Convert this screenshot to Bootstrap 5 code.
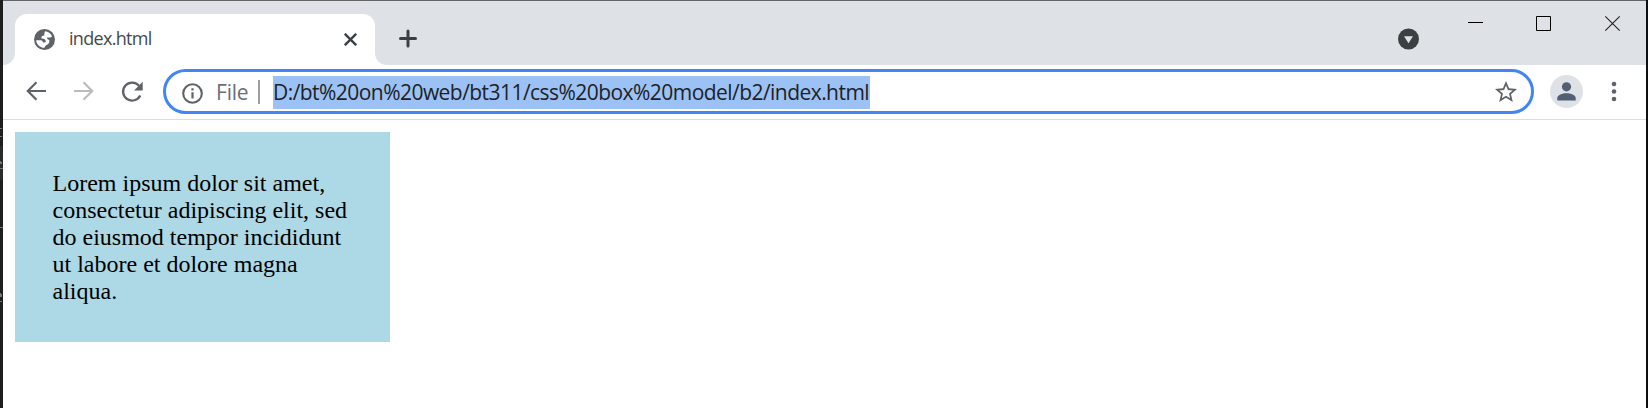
<!DOCTYPE html>
<html lang="en">
<head>
<meta charset="utf-8">
<title>index.html</title>
<link href="https://cdn.jsdelivr.net/npm/bootstrap@5.3.0/dist/css/bootstrap.min.css" rel="stylesheet">
<style>
body{height:408px;overflow:hidden;background:#1c1c1c;font-family:"Open Sans","Noto Sans",sans-serif;color:#3c4043}
svg{display:block;flex:none}
.edge-right{width:2px;background:#0c1013}
.strip{height:65px;background:#dee1e6;border-top:1px solid #626468}
.tab-curve{width:12px;height:51px;border-bottom-right-radius:12px;background:#dee1e6}
.tab-curve.after{border-radius:0 0 0 12px}
.tab-side{background:#fff;height:51px}
.tab-main{width:360px;height:51px;background:#fff;border-radius:12px 12px 0 0;padding:0 18px 1px 19px}
.tab-name{font-size:18px;line-height:24px;letter-spacing:-.7px;margin-left:14px;padding-bottom:2px;color:#45494d}
.new-tab{margin-left:10px;margin-bottom:2px}
.bar{height:55px;border-bottom:1px solid #dadce0}
.omni{width:1371px;height:45px;border:3px solid #4285f4;border-radius:23px;margin:4px 0 0 20px}
.scheme{font-size:21px;line-height:33px;color:#6b6e73;letter-spacing:-.2px;width:33px;margin-left:13px;padding-top:1px;white-space:nowrap}
.divide{width:2px;height:24px;background:#9b9da0;margin-left:9px}
.url{font-size:21px;line-height:33px;height:33px;width:597px;background:#9cc2f5;color:#202124;letter-spacing:-.55px;margin:1px 0 0 13px;white-space:nowrap}
.fav-star{margin-right:14px}
.page-box{width:375px;height:210px;padding:37.5px;margin:12px;background:#add8e6;color:#000;font:24px/27px "Liberation Serif",serif}
</style>
</head>
<body class="d-flex">
<svg width="3" height="408" viewBox="0 0 3 408" fill="#777"><path fill="#1e1e1e" d="M0 0h3v408H0z"/><path fill="#2a2a2d" d="M0 146h3v34H0z"/><path d="M0 128h2v1H0zm0 8h2v1H0zm0 25h1v1h1v2H0zm0 7h3v1H0zm0 59h3v1H0zm0 66h1v1h1v3H0zm0 8h2v1H0z"/></svg>
<main class="flex-grow-1 bg-white">
  <div class="strip d-flex align-items-end">
    <div class="tab-side"><div class="tab-curve"></div></div>
    <div class="tab-main d-flex align-items-center">
      <svg width="21" height="21" viewBox="2 2 20 20"><circle cx="12" cy="12" r="10" fill="#5f6368"/><path fill="#fff" d="M12.500 4.100c3 .1 5.400 1.900 6.700 4.700-.6.800-1.400 1.200-2.600 1.200h-2.200c.1 1.300.8 2.100 2.100 2.300.7 2.300-.4 4.300-2.800 5.200-1.200.5-1.300 1.600-1.700 2.300-4.100 0-7.600-3-8-7.200h3.800c1.500 0 2.300.6 2.700 1.900.6.9 2.600.4 2.700-.6.1-1.900-1.300-2.900-4-2.900-.6-1.700.6-2.900 2.600-2.900 0-1.700.2-2.400.7-4z"/></svg>
      <span class="tab-name">index.html</span>
      <svg class="ms-auto" width="13" height="13" viewBox="0 0 13 13" stroke="#3c4043" stroke-width="2.400"><path d="M.8.8 12.200 12.200M12.200.8.8 12.200"/></svg>
    </div>
    <div class="tab-side"><div class="tab-curve after"></div></div>
    <div class="tab-curve rounded-0 d-flex align-items-center flex-grow-1">
      <svg class="new-tab" width="24" height="19" viewBox="0 0 24 19" stroke="#3c4043" stroke-width="3" stroke-linecap="round"><path d="M3.500 9.500h15M11 2v15"/></svg>
    </div>
    <svg width="250" height="64" viewBox="1396 1 250 64"><circle cx="1408.500" cy="39" r="10.500" fill="#3c4043"/><path d="M1404 36.200h9l-4.500 7z" fill="#dee1e6"/><path d="M1468 22.500h15M1536.500 16.500h14v14h-14z" fill="none" stroke="#000"/><path d="m1605.300 16.300 14.400 14.400m0-14.400-14.400 14.400" stroke="#222" stroke-width="1.100"/></svg>
  </div>
  <div class="bar d-flex align-items-start">
    <svg width="140" height="54" viewBox="3 65 140 54" fill="none" stroke-width="2.200"><path d="M46 91H28m8.500-8.700L27.800 91l8.700 8.700" stroke="#5f6368"/><path d="M74 91h18m-8.500-8.700 8.700 8.700-8.700 8.700" stroke="#babcbe"/><path d="M140.200 95.500a9 9 0 1 1-1.100-9.600" stroke="#5f6368" stroke-width="2.300"/><path d="M142.700 81.800v8.700H134z" fill="#5f6368"/></svg>
    <div class="omni d-flex align-items-center">
      <svg class="ms-3 mt-1" width="21" height="21" viewBox="0 0 21 21"><circle cx="10.500" cy="10.500" r="9.300" fill="none" stroke="#5f6368" stroke-width="2.100"/><path d="M9.400 5.300h2.200v2.200H9.400zm0 4h2.200v6.300H9.400z" fill="#5f6368"/></svg>
      <span class="scheme">File</span><span class="divide"></span>
      <span class="url">D:/bt%20on%20web/bt311/css%20box%20model/b2/index.html</span>
      <svg class="ms-auto fav-star" width="22" height="21" viewBox="2 2 20 19" fill="#5f6368"><path d="m22 9.240-7.190-.62L12 2 9.190 8.630 2 9.240l5.460 4.730L5.820 21 12 17.270 18.180 21l-1.630-7.030L22 9.240zM12 15.400l-3.760 2.270 1-4.280-3.320-2.880 4.380-.38L12 6.100l1.710 4.040 4.380.38-3.320 2.880 1 4.280L12 15.400z"/></svg>
    </div>
    <svg width="112" height="54" viewBox="1534 65 112 54"><circle cx="1566.500" cy="91.500" r="16.500" fill="#dee1e6"/><circle cx="1566.500" cy="86.800" r="4.600" fill="#525e72"/><path d="M1557.300 100.500v-2.200c0-3.300 5-5 9.200-5s9.200 1.700 9.200 5v2.200z" fill="#525e72"/><g fill="#5f6368"><circle cx="1614" cy="84" r="2.300"/><circle cx="1614" cy="91.500" r="2.300"/><circle cx="1614" cy="99" r="2.300"/></g></svg>
  </div>
  <div class="page-box">Lorem ipsum dolor sit amet, consectetur adipiscing elit, sed do eiusmod tempor incididunt ut labore et dolore magna aliqua.</div>
</main>
<div class="edge-right"></div>
<script src="https://cdn.jsdelivr.net/npm/bootstrap@5.3.0/dist/js/bootstrap.bundle.min.js"></script>
</body>
</html>
